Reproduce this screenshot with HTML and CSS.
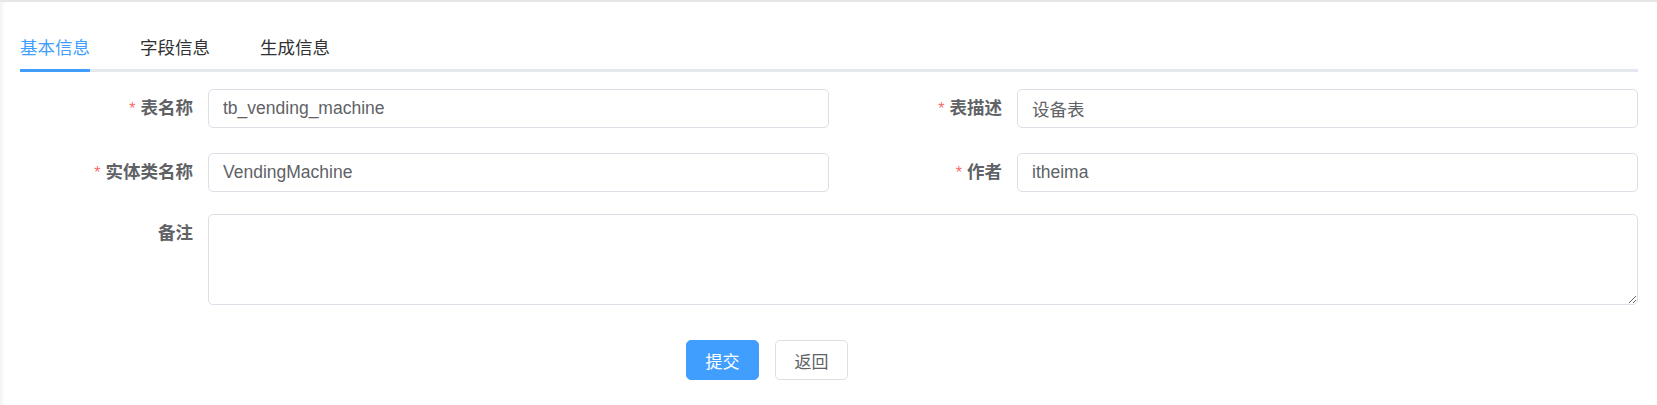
FILE: index.html
```html
<!DOCTYPE html>
<html lang="zh-CN">
<head>
<meta charset="utf-8">
<title>基本信息</title>
<link rel="stylesheet" href="styles.css">
</head>
<body>
<div class="app">
  <div class="tabs">
    <div class="tab active">基本信息</div>
    <div class="tab">字段信息</div>
    <div class="tab">生成信息</div>
  </div>
  <form class="form">
    <div class="row">
      <div class="item">
        <label class="label"><span class="req">*</span>表名称</label>
        <div class="control"><input class="input" type="text" value="tb_vending_machine"></div>
      </div>
      <div class="item">
        <label class="label"><span class="req">*</span>表描述</label>
        <div class="control"><input class="input" type="text" value="设备表"></div>
      </div>
    </div>
    <div class="row">
      <div class="item">
        <label class="label"><span class="req">*</span>实体类名称</label>
        <div class="control"><input class="input" type="text" value="VendingMachine"></div>
      </div>
      <div class="item">
        <label class="label"><span class="req">*</span>作者</label>
        <div class="control"><input class="input" type="text" value="itheima"></div>
      </div>
    </div>
    <div class="row">
      <div class="item full">
        <label class="label">备注</label>
        <div class="control"><textarea class="textarea" rows="4"></textarea></div>
      </div>
    </div>
    <div class="actions">
      <button type="button" class="btn primary">提交</button>
      <button type="button" class="btn">返回</button>
    </div>
  </form>
</div>
</body>
</html>
```

FILE: styles.css
```css
* { box-sizing: border-box; }
html, body { margin: 0; padding: 0; background: #fff; }
body {
  font-family: "Liberation Sans", "Noto Sans CJK SC", sans-serif;
  color: #606266;
}
.app {
  height: 405px;
  border-top: 2px solid #e6e6e6;
  padding: 20px 19px 0 20px;
  box-shadow: inset 4px 0 4px -2px rgba(0,0,0,0.06);
}
.tabs {
  display: flex;
  gap: 50px;
  height: 50px;
  box-shadow: inset 0 -3px 0 #e4e7ed;
}
.tab {
  height: 50px;
  line-height: 53px;
  font-size: 17.5px;
  color: #303133;
}
.tab.active {
  color: #409eff;
  border-bottom: 3px solid #409eff;
}
.form { margin-top: 17px; }
.row { display: flex; margin-bottom: 25px; }
.row:nth-child(2) { margin-bottom: 22px; }
.item { display: flex; width: 50%; }
.item.full { width: 100%; }
.label {
  width: 188px;
  flex: none;
  text-align: right;
  padding-right: 15px;
  font-size: 17.5px;
  font-weight: bold;
  line-height: 39px;
  color: #606266;
}
.req { color: #f56c6c; font-weight: normal; margin-right: 5px; font-size: 16px; }
.control { flex: 1; display: flex; }
.input {
  width: 100%;
  height: 39px;
  border: 1px solid #dcdfe6;
  border-radius: 5px;
  padding: 0 14px;
  font-family: inherit;
  font-size: 17.5px;
  color: #606266;
  outline: none;
  background: #fff;
}
.textarea {
  width: 100%;
  height: 91px;
  border: 1px solid #dcdfe6;
  border-radius: 5px;
  padding: 6px 14px;
  font-family: inherit;
  font-size: 17.5px;
  color: #606266;
  outline: none;
  resize: vertical;
  display: block;
}
.actions {
  display: flex;
  gap: 16px;
  padding-left: 666px;
  margin-top: 35px;
}
.btn {
  width: 73px;
  height: 40px;
  border: 1px solid #dcdfe6;
  border-radius: 5px;
  background: #fff;
  color: #606266;
  font-family: inherit;
  font-size: 17px;
  padding: 0;
  cursor: pointer;
}
.btn.primary {
  background: #409eff;
  border-color: #409eff;
  color: #fff;
}
```
